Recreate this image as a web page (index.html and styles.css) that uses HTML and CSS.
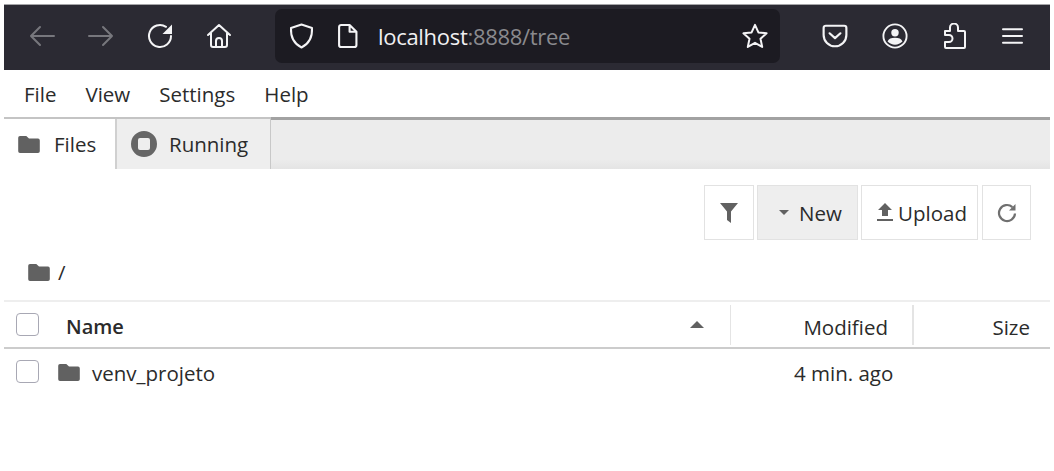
FILE: index.html
```html
<!DOCTYPE html>
<html>
<head>
    <meta charset="utf-8">
    <title>localhost:8888/tree</title>
    <link rel="stylesheet" href="styles.css">
</head>
<body>
    <div class="janela">
        <!-- barra do navegador -->
        <div class="navegador">
            <div class="nav-botoes">
                <svg class="ico ico-off" viewBox="0 0 26 24"><path d="M25 12H2M11 3l-9 9 9 9"/></svg>
                <svg class="ico ico-off" viewBox="0 0 26 24"><path d="M1 12h23M15 3l9 9-9 9"/></svg>
                <svg class="ico" viewBox="0 0 26 26"><path d="M24 13A11 11 0 1 1 19 3.800"/><path class="cheio" d="M25 1.500V11h-9.500z"/></svg>
                <svg class="ico" viewBox="0 0 26 26"><path d="M2 12 13 2l11 10M5 10v12a2 2 0 0 0 2 2h12a2 2 0 0 0 2-2V10M10 24v-6a3 3 0 0 1 6 0v6"/></svg>
            </div>
            <div class="endereco">
                <svg class="ico ico-escudo" viewBox="0 0 24 26"><path d="M12 1.500 22.500 5c.5 9-2.500 15.500-10.500 19.500C4 20.500 1 14 1.500 5z"/></svg>
                <svg class="ico ico-pagina" viewBox="0 0 20 24"><path d="M4 1.500h8l6.500 6.500v12.500a2 2 0 0 1-2 2H4a2 2 0 0 1-2-2v-17a2 2 0 0 1 2-2zM12 1.500V8h6.500"/></svg>
                <span class="url">localhost<span class="url-fraca">:8888/tree</span></span>
                <svg class="ico ico-estrela" viewBox="0 0 26 26"><path d="m13 1.800 3.400 7.600 8.200.9-6.100 5.500 1.700 8.100-7.200-4.100-7.200 4.100 1.700-8.100-6.100-5.500 8.200-.9z"/></svg>
            </div>
            <div class="nav-extras">
                <svg class="ico" viewBox="0 0 24 22"><path d="M3.500 1.500h17a2 2 0 0 1 2 2V10a10.500 10.500 0 0 1-21 0V3.500a2 2 0 0 1 2-2zM7 8.500l5 4.500 5-4.500"/></svg>
                <svg class="ico" viewBox="0 0 28 28"><circle cx="14" cy="14" r="12.500"/><circle class="cheio" cx="14" cy="10.500" r="4"/><path class="cheio" d="M6 20c1-3 4-4 8-4s7 1 8 4c-2 2-5 3.500-8 3.500S8 22 6 20z"/></svg>
                <svg class="ico" viewBox="0 0 24 26"><path d="M2 8h5V4.500a4 4 0 0 1 8 0V8h6a1 1 0 0 1 1 1v15a1 1 0 0 1-1 1H3a1 1 0 0 1-1-1v-5h4a3.500 3.500 0 0 0 0-7H2z"/></svg>
                <svg class="ico ico-menu" viewBox="0 0 22 18"><path d="M1 2h20M1 9h20M1 16h20"/></svg>
            </div>
        </div>

        <div class="menu">
            <span>File</span>
            <span>View</span>
            <span>Settings</span>
            <span>Help</span>
        </div>

        <div class="abas">
            <div class="aba aba-ativa">
                <svg class="pasta" viewBox="0 0 24 20"><path d="M2 1h7l3 3h10a2 2 0 0 1 2 2v12a2 2 0 0 1-2 2H2a2 2 0 0 1-2-2V3a2 2 0 0 1 2-2z"/></svg>
                Files
            </div>
            <div class="aba">
                <svg class="parar" viewBox="0 0 26 26"><path fill-rule="evenodd" d="M13 0a13 13 0 1 1 0 26 13 13 0 0 1 0-26zM9 7a2 2 0 0 0-2 2v8a2 2 0 0 0 2 2h8a2 2 0 0 0 2-2V9a2 2 0 0 0-2-2z"/></svg>
                Running
            </div>
            <div class="abas-resto"></div>
        </div>

        <div class="ferramentas">
            <button class="botao botao-filtro"><svg viewBox="0 0 18 20"><path d="M0 0h18l-7 8.500V20l-4-3V8.500z"/></svg></button>
            <button class="botao botao-novo"><i class="seta"></i>New</button>
            <button class="botao botao-upload"><svg viewBox="0 0 16 20"><path d="M8 0l7 7h-4v6H5V7H1zM0 16h16v2H0z"/></svg>Upload</button>
            <button class="botao botao-atualizar"><svg viewBox="0 0 20 20"><path d="M18 10.500a8 8 0 1 1-2.600-6.400"/><path class="seta-atualizar" d="M18.500 1v6.500H12z"/></svg></button>
        </div>

        <div class="caminho">
            <svg class="pasta" viewBox="0 0 24 20"><path d="M2 1h7l3 3h10a2 2 0 0 1 2 2v12a2 2 0 0 1-2 2H2a2 2 0 0 1-2-2V3a2 2 0 0 1 2-2z"/></svg>
            <span>/</span>
        </div>

        <div class="tabela">
            <div class="linha cabecalho">
                <i class="caixa"></i>
                <div class="col-nome"><b>Name</b><i class="seta-cima"></i></div>
                <div class="col-data">Modified</div>
                <div class="col-tam">Size</div>
            </div>
            <div class="linha">
                <i class="caixa"></i>
                <svg class="pasta" viewBox="0 0 24 20"><path d="M2 1h7l3 3h10a2 2 0 0 1 2 2v12a2 2 0 0 1-2 2H2a2 2 0 0 1-2-2V3a2 2 0 0 1 2-2z"/></svg>
                <div class="item-nome">venv_projeto</div>
                <div class="item-data">4 min. ago</div>
            </div>
        </div>
    </div>
</body>
</html>
```

FILE: styles.css
```css
* {
    box-sizing: border-box;
}

html, body {
    margin: 0;
    height: 100%;
    background-color: #fff;
}

body {
    font-family: "Open Sans", "Noto Sans", sans-serif;
    font-size: 20.500px;
    color: #2b2b2b;
    overflow: hidden;
}

.janela {
    width: 1046px;
    margin-left: 4px;
    padding-top: 4px;
}

.ico {
    fill: none;
    stroke: #f4f4f6;
    stroke-width: 2;
    stroke-linecap: round;
    stroke-linejoin: round;
    flex: none;
    width: 26px;
    height: 26px;
}

.ico-off {
    stroke: #77777d;
}

.ico-menu {
    width: 21px;
}

.ico .cheio {
    fill: #f4f4f6;
    stroke: none;
}

.navegador {
    display: flex;
    align-items: center;
    height: 66px;
    padding-bottom: 3px;
    background-color: #2b2a33;
    border-top: 1px solid #a5a5a8;
}

.nav-botoes {
    display: flex;
    gap: 33px;
    width: 271px;
    padding-left: 25px;
}

.endereco {
    display: flex;
    align-items: center;
    width: 505px;
    height: 54px;
    padding: 0 12px 0 14px;
    background-color: #1c1b22;
    border-radius: 7px;
}

.ico-escudo {
    width: 25px;
}

.ico-pagina {
    width: 21px;
    margin-left: 23px;
}

.url {
    flex: 1;
    margin-left: 20px;
    font-size: 22px;
    letter-spacing: -.3px;
    color: #f0f0f2;
}

.url-fraca {
    color: #8a8a8e;
}

.nav-extras {
    display: flex;
    align-items: center;
    gap: 34px;
    padding-left: 42px;
}

.menu {
    display: flex;
    gap: 29px;
    align-items: center;
    height: 47px;
    padding-left: 20px;
}

.abas {
    display: flex;
    height: 52px;
    border-top: 2px solid #c4c4c4;
}

.aba {
    display: flex;
    align-items: center;
    gap: 12px;
    width: 154px;
    padding-left: 14px;
    background-color: #eee;
    border-right: 1px solid #c8c8c8;
}

.aba-ativa {
    gap: 14px;
    width: 113px;
    background-color: #fff;
    border-right: 2px solid #d0d0d0;
}

.abas-resto {
    flex: 1;
    margin-top: -2px;
    background: linear-gradient(#ececec 80%, #e4e4e4);
    border-top: 3px solid #a2a2a2;
}

.pasta {
    flex: none;
    width: 22px;
    height: 18px;
    fill: #616161;
}

.parar {
    flex: none;
    width: 26px;
    height: 26px;
    fill: #666;
}

.ferramentas {
    display: flex;
    justify-content: flex-end;
    gap: 3px;
    padding: 16px 19px 0 0;
}

.botao {
    display: flex;
    align-items: center;
    justify-content: center;
    height: 55px;
    padding: 0;
    font: inherit;
    color: inherit;
    background-color: #fff;
    border: 1px solid #e2e2e2;
}

.botao-filtro {
    width: 50px;
}

.botao-filtro svg {
    width: 18px;
    height: 20px;
    fill: #616161;
}

.botao-novo {
    width: 101px;
    padding-left: 6px;
    background-color: #eee;
}

.seta {
    width: 0;
    height: 0;
    margin-right: 10px;
    border-left: 5.500px solid transparent;
    border-right: 5.500px solid transparent;
    border-top: 5.500px solid #616161;
}

.botao-upload {
    width: 117px;
    padding-left: 5px;
}

.botao-upload svg {
    width: 16px;
    height: 20px;
    margin-right: 5px;
    fill: #616161;
}

.botao-atualizar {
    width: 49px;
    margin-left: 1px;
}

.botao-atualizar svg {
    width: 20px;
    height: 20px;
    fill: none;
    stroke: #707070;
    stroke-width: 2.200;
}

.botao-atualizar .seta-atualizar {
    fill: #707070;
    stroke: none;
}

.caminho {
    display: flex;
    align-items: center;
    gap: 8px;
    height: 60px;
    padding: 3px 0 0 24px;
}

.tabela {
    border-top: 2px solid #eee;
}

.linha {
    display: flex;
    align-items: center;
    height: 45px;
    padding-left: 12px;
}

.linha.cabecalho {
    height: 47px;
    border-bottom: 2px solid #ccc;
}

.caixa {
    flex: none;
    width: 23px;
    height: 23px;
    background-color: #fff;
    border: 1px solid #a8a8b4;
    border-radius: 4px;
}

.col-nome {
    display: flex;
    align-items: center;
    justify-content: space-between;
    width: 691px;
    padding: 4px 26px 0 27px;
}

.col-nome b {
    font-weight: 600;
    font-size: 20px;
}

.seta-cima {
    width: 0;
    height: 0;
    margin-top: -4px;
    border-left: 7px solid transparent;
    border-right: 7px solid transparent;
    border-bottom: 7px solid #616161;
}

.col-data, .col-tam {
    height: 40px;
    line-height: 44px;
    text-align: right;
    border-left: 1px solid #e4e4e4;
}

.col-data {
    width: 182px;
    padding-right: 24px;
}

.col-tam {
    flex: 1;
    padding-right: 20px;
    border-left-width: 2px;
}

.linha .pasta {
    margin-left: 19px;
}

.item-nome {
    width: 702px;
    margin-left: 12px;
    padding-top: 2px;
}

.item-data {
    padding-top: 2px;
    white-space: nowrap;
}
```
